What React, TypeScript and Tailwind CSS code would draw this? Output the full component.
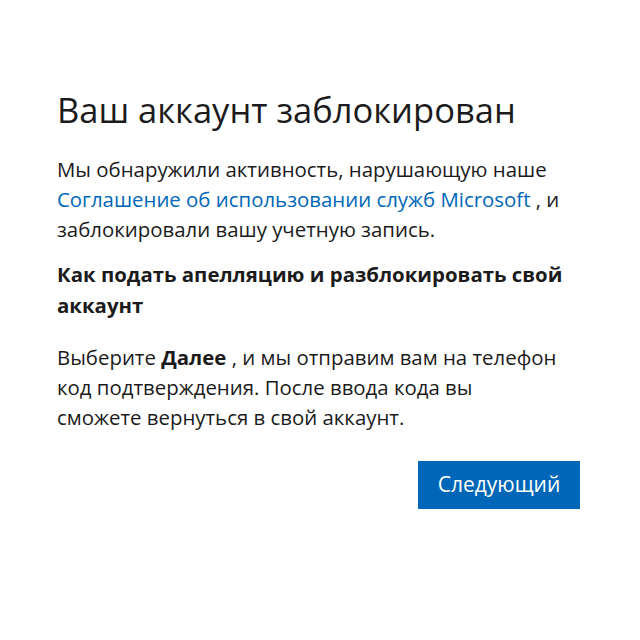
export default function App() {
  return (
    <div
      className="min-h-screen w-full bg-white text-[#1b1b1b]"
      style={{ fontFamily: '"Segoe UI", "Open Sans", "Noto Sans", sans-serif' }}
    >
      <div className="pl-[57px] pt-[88px] w-[580px]">
        <h1 className="text-[34.5px] leading-[44px] font-normal">
          Ваш аккаунт заблокирован
        </h1>
        <p className="mt-[22px] text-[20.4px] leading-[30px]">
          Мы обнаружили активность, нарушающую наше{' '}
          <a href="#" className="text-[#0067b8]">
            Соглашение об использовании служб Microsoft
          </a>{' '}
          , и заблокировали вашу учетную запись.
        </p>
        <h2 className="mt-[15px] text-[20.4px] leading-[31px] font-bold">
          Как подать апелляцию и разблокировать свой аккаунт
        </h2>
        <p className="mt-[21px] text-[20.4px] leading-[30px]">
          Выберите <b>Далее</b> , и мы отправим вам на телефон код подтверждения. После ввода кода вы
          <br />
          сможете вернуться в свой аккаунт.
        </p>
        <div className="mt-[29px] flex justify-end">
          <button className="w-[162px] h-[48px] bg-[#0067b8] text-white text-[21px]">
            Следующий
          </button>
        </div>
      </div>
    </div>
  );
}
